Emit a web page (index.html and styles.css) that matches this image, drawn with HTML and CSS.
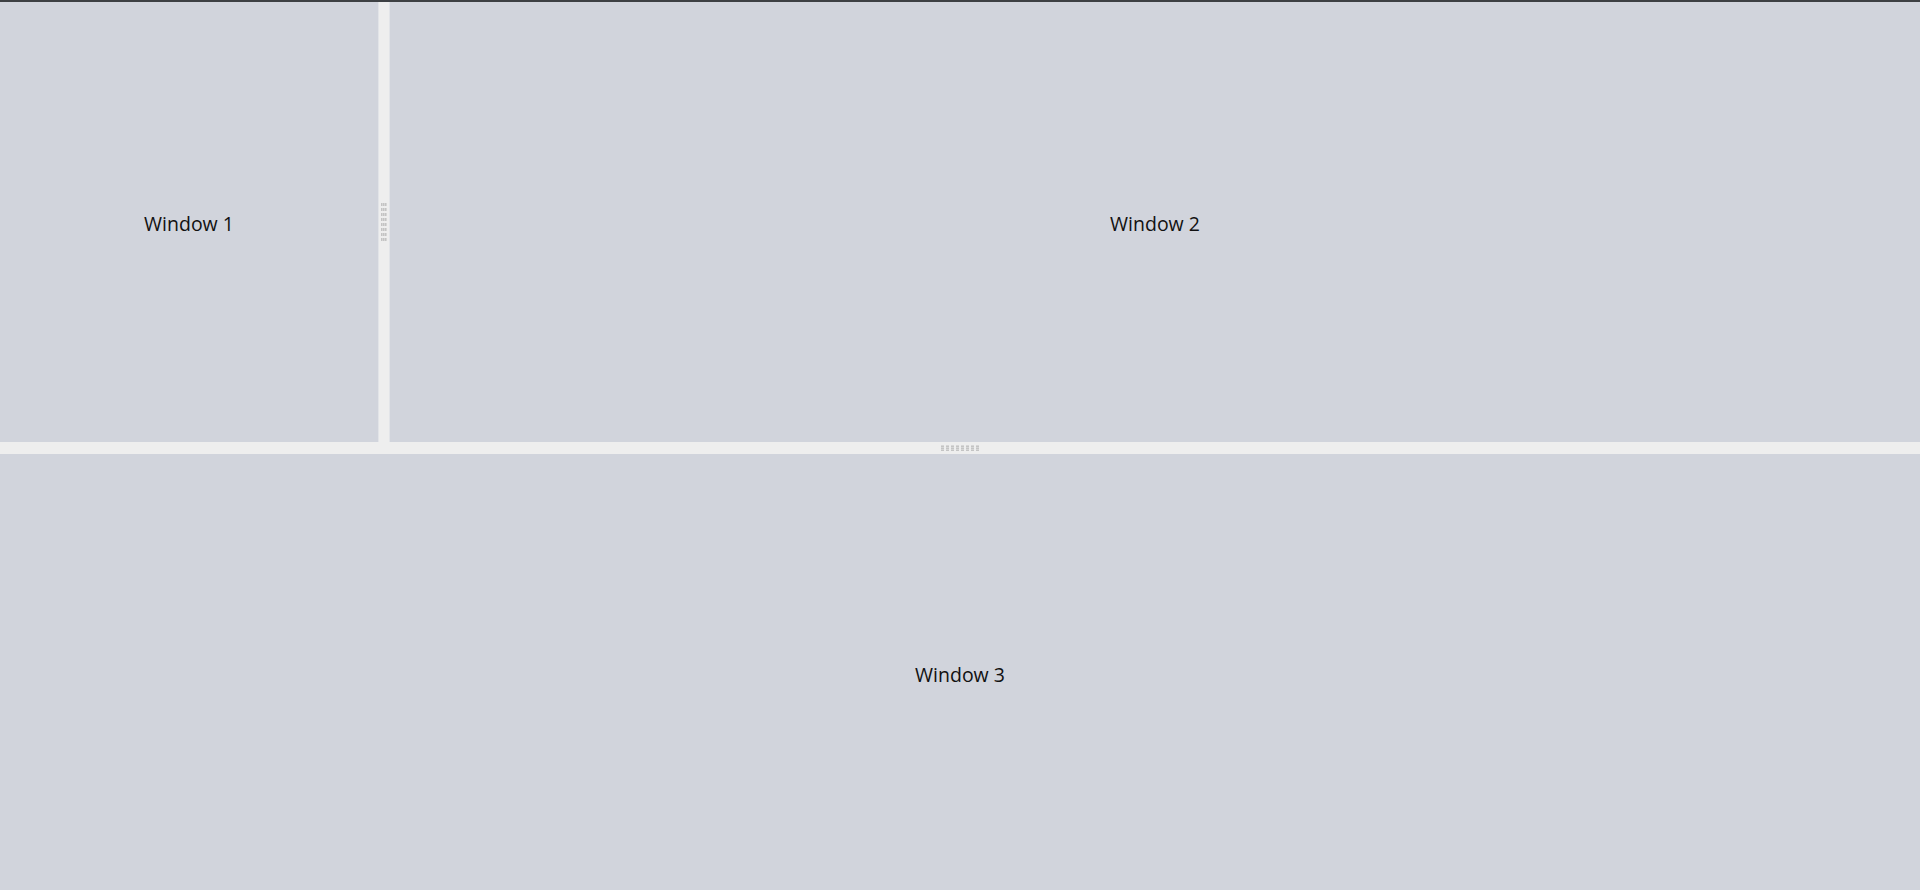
FILE: index.html
```html
<!DOCTYPE html>
<html>
<head>
<meta charset="utf-8">
<link rel="stylesheet" href="styles.css">
</head>
<body>
<div class="app">
  <div class="row-top">
    <div class="pane pane-1">Window 1</div>
    <div class="splitter splitter-v">
      <div class="grip grip-v">
        <span></span><span></span><span></span><span></span><span></span><span></span><span></span><span></span>
      </div>
    </div>
    <div class="pane pane-2">Window 2</div>
  </div>
  <div class="splitter splitter-h">
    <div class="grip grip-h">
      <span></span><span></span><span></span><span></span><span></span><span></span><span></span><span></span>
    </div>
  </div>
  <div class="row-bottom">
    <div class="pane pane-3">Window 3</div>
  </div>
</div>
</body>
</html>
```

FILE: styles.css
```css
html, body {
  margin: 0;
  padding: 0;
  height: 100%;
  overflow: hidden;
}
body {
  font-family: "Open Sans", "Noto Sans", sans-serif;
  color: #111111;
}
.app {
  height: 890px;
  display: flex;
  flex-direction: column;
  border-top: 2px solid #3d4043;
  box-sizing: border-box;
}
.row-top {
  height: 440px;
  display: flex;
}
.row-bottom {
  flex: 1;
  display: flex;
}
.pane {
  background: #d1d4dc;
  display: flex;
  align-items: center;
  justify-content: center;
  font-size: 19.5px;
  padding-top: 2px;
  box-sizing: border-box;
}
.pane-3 {
  padding-top: 5px;
}
.pane-1 {
  width: 378px;
}
.pane-2, .pane-3 {
  flex: 1;
}
.splitter {
  background: #eeeeee;
  display: flex;
  align-items: center;
  justify-content: center;
}
.splitter-v {
  width: 12px;
  box-shadow: inset 1px 0 0 #e2e4e8, inset -1px 0 0 #e2e4e8;
}
.splitter-h {
  height: 12px;
}
.grip {
  display: flex;
  gap: 2px;
}
.grip-v {
  flex-direction: column;
}
.grip-v span {
  width: 6px;
  height: 3px;
  background: repeating-linear-gradient(90deg, #c4c4c4 0 1px, #d6d6d6 1px 2px);
}
.grip-h span {
  width: 3px;
  height: 6px;
  background: repeating-linear-gradient(0deg, #c4c4c4 0 1px, #d6d6d6 1px 2px);
}
```
